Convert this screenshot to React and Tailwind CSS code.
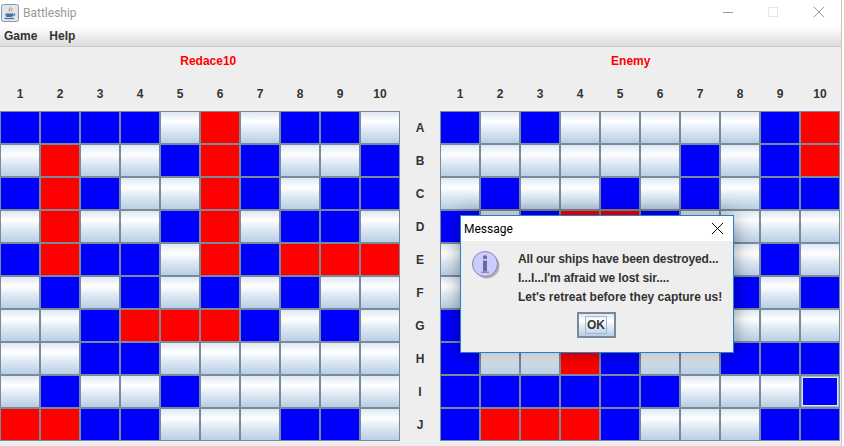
import { X } from "lucide-react";

const cols = [1, 2, 3, 4, 5, 6, 7, 8, 9, 10];
const rows = ["A", "B", "C", "D", "E", "F", "G", "H", "I", "J"];

const playerBoard = [
  "BBBBWRWBBW",
  "WRWWBRBWWB",
  "BRBWWRBWBB",
  "WRWWBRWBBW",
  "BRBBWRBRRR",
  "WBWBWBWBWW",
  "WWBRRRBWBW",
  "WWBBWWWWWW",
  "WBWWBWWWWW",
  "RRBBWWWBBW",
];

const enemyBoard = [
  "BWBWWWWWBR",
  "WWWWWWBWBR",
  "WBWWBWBWBB",
  "BWBRRBWWWW",
  "WWWWWWWWBW",
  "WWWWWWWBWB",
  "BWWWWWWWWW",
  "BWWRBWWBBB",
  "BBBBBBWWWF",
  "BRRRBWWWBB",
];

const cellStyles = {
  B: "bg-[#0000ff]",
  R: "bg-[#ff0000]",
  W: "bg-[linear-gradient(#dde8f3_0%,#ffffff_30%,#dde8f3_60%,#b8cfe5_100%)]",
};

const Cell = ({ kind }) => {
  if (kind === "F") {
    return (
      <div className="h-[33px] border border-[#7a8a99]">
        <div className="h-full border border-[#a3b8cc] bg-[#dde8f3] p-px">
          <div className="h-full bg-[#0000ff]" />
        </div>
      </div>
    );
  }
  return <div className={`h-[33px] border border-[#7a8a99] ${cellStyles[kind]}`} />;
};

const Board = ({ data }) => (
  <div className="grid w-[400px] grid-cols-10">
    {data.join("").split("").map((kind, i) => (
      <Cell key={i} kind={kind} />
    ))}
  </div>
);

const ColumnHeader = () => (
  <div className="grid w-[400px] grid-cols-10">
    {cols.map((n) => (
      <div key={n} className="text-center">{n}</div>
    ))}
  </div>
);

const JavaIcon = () => (
  <svg width="18" height="18" viewBox="0 0 18 18">
    <rect x="0.5" y="0.5" width="17" height="17" rx="2" fill="#dfe6ee" stroke="#8a99ab" />
    <path d="M9.5 2.5c1.5 1.8-1.8 2.8-.8 4.6.3.6.8 1 .8 1-1.6-.7-2.5-1.8-1.6-3 .7-1 1.800-1.400 1.600-2.600z" fill="#d9661f" />
    <path d="M11.500 4.500c-1 .8-1.400 1.400-.8 2.600" fill="none" stroke="#d9661f" />
    <path d="M4.500 9.500h7.500v1.500c0 1.500-1 2-2 2H6.500c-1 0-2-.5-2-2z" fill="#4a6f9c" />
    <path d="M12 10h1.500c.8 0 .8 1.500-1.500 1.800" fill="none" stroke="#4a6f9c" />
    <path d="M3.500 14.500h9.500" stroke="#4a6f9c" strokeWidth="1.200" />
  </svg>
);

const InfoIcon = () => (
  <svg width="30" height="30" viewBox="0 0 30 30">
    <circle cx="15" cy="15" r="12.500" fill="#000" opacity="0.25" />
    <circle cx="13" cy="13" r="12.500" fill="#ccccff" stroke="#8484b0" strokeWidth="1" />
    <rect x="11" y="4.500" width="4" height="3.500" fill="#7070a0" />
    <rect x="11" y="9.500" width="4" height="11" fill="#6a6a9c" />
    <rect x="9" y="20.500" width="8" height="1.500" fill="#8a8ab8" />
  </svg>
);

const MessageDialog = () => (
  <div className="absolute left-[460px] top-[215px] h-[138px] w-[274px] border border-[#1883d7] bg-[#eeeeee] shadow-[0_0_18px_rgba(0,0,0,0.4)]">
    <div className="flex h-[25px] items-center justify-between bg-white pl-[3px] pr-[5px] font-['Roboto',sans-serif] text-[12px] text-black">
      <span>Message</span>
      <X size={21} strokeWidth={1.1} />
    </div>
    <div className="flex pl-[11px] pt-[10px]">
      <InfoIcon />
      <div className="ml-[16px] text-[12px] font-bold leading-[19px] text-[#333333]">
        <p className="mt-[-1px] tracking-[-0.14px]">All our ships have been destroyed...</p>
        <p className="tracking-[-0.09px]">I...I...I'm afraid we lost sir....</p>
        <p>Let's retreat before they capture us!</p>
      </div>
    </div>
    <div className="mt-[5px] flex justify-center pr-[2px]">
      <div className="flex h-[26px] w-[39px] items-center justify-center border-2 border-[#7a8a99] bg-[linear-gradient(#dde8f3_0%,#ffffff_30%,#dde8f3_60%,#b8cfe5_100%)] text-[12px] font-bold text-[#333333]">
        <span className="border border-[#a3b8cc] px-px leading-[16px]">OK</span>
      </div>
    </div>
  </div>
);

const App = () => {
  return (
    <div className="relative flex h-[446px] w-[844px] overflow-hidden bg-white font-['Liberation_Sans',Arial,sans-serif]">
      <div className="flex h-full w-[842px] flex-col border-r border-[#c4c4c4] bg-[#eeeeee]">
        {/* Title bar */}
        <div className="flex h-[26px] items-center bg-white pl-[1px]">
          <JavaIcon />
          <span className="ml-[4px] font-['Roboto',sans-serif] text-[12px] text-[#999999]">Battleship</span>
          <div className="mb-[2px] ml-auto flex items-center">
            <div className="mr-[35px] h-px w-[10px] bg-[#999999]" />
            <div className="mr-[31px] h-[10px] w-[10px] border border-[#e6e6e6]" />
            <X size={20} strokeWidth={0.9} className="mr-[12px] text-[#777777]" />
          </div>
        </div>

        {/* Menu bar */}
        <div className="flex h-[21px] items-center gap-[12px] border-b border-[#c9c9c9] bg-[linear-gradient(#ffffff,#dcdcdc)] pl-[4px] text-[12px] font-bold text-[#333333]">
          <span>Game</span>
          <span>Help</span>
        </div>

        {/* Player names */}
        <div className="flex h-[28px] items-center text-[12px] font-bold text-[#ff0000]">
          <div className="w-[417px] text-center">Redace10</div>
          <div className="w-[425px] pl-[4px] text-center">Enemy</div>
        </div>

        {/* Column numbers */}
        <div className="flex h-[36px] items-center pt-[2px] text-[12px] font-bold text-[#333333]">
          <ColumnHeader />
          <div className="w-[40px]" />
          <ColumnHeader />
        </div>

        {/* Boards */}
        <div className="flex">
          <Board data={playerBoard} />
          <div className="flex w-[40px] flex-col text-[12px] font-bold text-[#333333]">
            {rows.map((r) => (
              <div key={r} className="flex h-[33px] items-center justify-center">{r}</div>
            ))}
          </div>
          <Board data={enemyBoard} />
        </div>
      </div>
      <MessageDialog />
    </div>
  );
};

export default App;
